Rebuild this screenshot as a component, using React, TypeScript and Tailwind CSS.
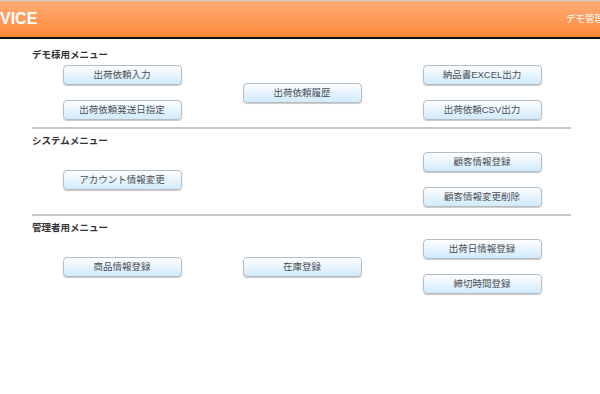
const jp = { fontFamily: '"Liberation Sans", "Noto Sans CJK JP", sans-serif' };

// ─── Sub-components ───────────────────────────────────────────────────────────

function MenuButton({ label }: { label: string }) {
  return (
    <button
      type="button"
      className="w-[119px] h-[20px] rounded-[4px] border border-[#b4bcc4] bg-gradient-to-b from-[#fdfeff] to-[#d2eafc] shadow-[0_1px_1px_rgba(0,0,0,0.22)] text-[9.5px] leading-none text-[#4a4f55] flex items-center justify-center"
    >
      {label}
    </button>
  );
}

function Heading({ children, className = '' }: { children: string; className?: string }) {
  return (
    <h2 className={`h-[16px] leading-[16px] text-[9.5px] font-bold text-[#333] ${className}`}>
      {children}
    </h2>
  );
}

function Col({ items }: { items: string[] }) {
  return (
    <div className="flex flex-col items-center justify-center gap-[15px]">
      {items.map((l) => (
        <MenuButton key={l} label={l} />
      ))}
    </div>
  );
}

function Section({ title, cols, first }: { title: string; cols: string[][]; first?: boolean }) {
  return (
    <section>
      <Heading className={first ? 'mt-[8px]' : 'mt-[4px]'}>{title}</Heading>
      <div className={`grid grid-cols-3 ${first ? 'mt-[2px]' : 'mt-[3px]'}`}>
        {cols.map((c, i) => (
          <Col key={i} items={c} />
        ))}
      </div>
    </section>
  );
}

// ─── Component ────────────────────────────────────────────────────────────────

export default function App() {
  return (
    <div className="w-[600px] h-[394px] overflow-hidden bg-white" style={jp}>
      {/* ── Header ── */}
      <header className="h-[39px] border-t border-[#c9ccd2] border-b-[2px] border-b-[#111] bg-gradient-to-b from-[#ffad76] to-[#ff8737] flex items-center justify-between">
        <span className="text-white font-bold text-[16px] leading-none">VICE</span>
        <span className="text-white text-[9.5px] whitespace-nowrap w-[34px] overflow-hidden">デモ管理者様</span>
      </header>

      <main className="ml-[32px] w-[540px]">
        <Section
          first
          title="デモ様用メニュー"
          cols={[
            ['出荷依頼入力', '出荷依頼発送日指定'],
            ['出荷依頼履歴'],
            ['納品書EXCEL出力', '出荷依頼CSV出力'],
          ]}
        />
        <div className="mt-[7px] h-[2px] bg-[#c8c8c8] w-[539px]" />
        <Section
          title="システムメニュー"
          cols={[['アカウント情報変更'], [], ['顧客情報登録', '顧客情報変更削除']]}
        />
        <div className="mt-[7px] h-[2px] bg-[#c8c8c8] w-[539px]" />
        <Section
          title="管理者用メニュー"
          cols={[['商品情報登録'], ['在庫登録'], ['出荷日情報登録', '締切時間登録']]}
        />
      </main>
    </div>
  );
}
